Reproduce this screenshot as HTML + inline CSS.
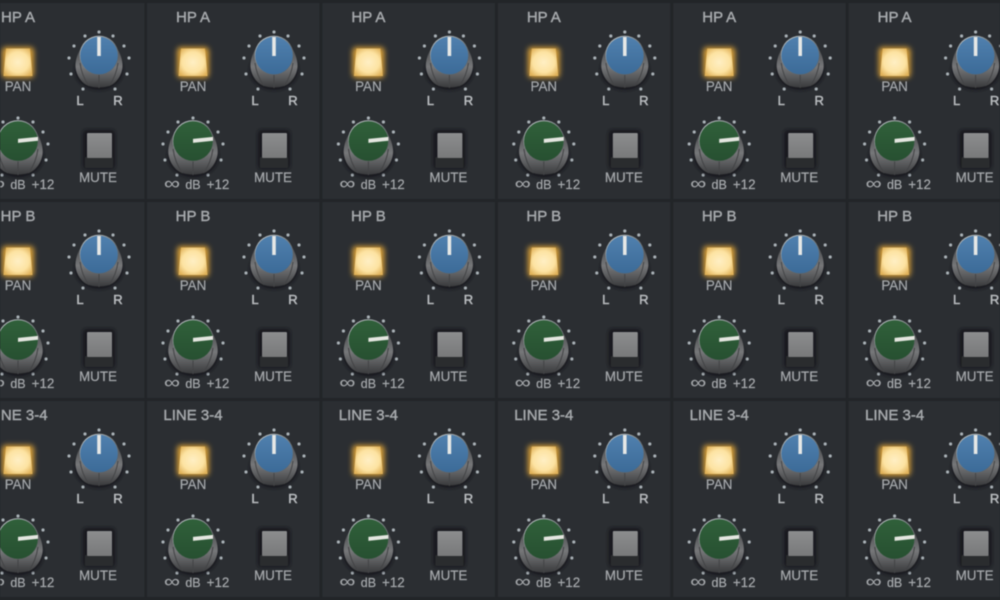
<!DOCTYPE html>
<html><head><meta charset="utf-8"><style>
html,body{margin:0;padding:0;background:#222528;width:1000px;height:600px;overflow:hidden}
svg{display:block;filter:blur(.5px)}
text{font-family:"Liberation Sans",sans-serif;fill:#a6a9ac;text-anchor:middle;stroke:#a6a9ac;stroke-width:.2px}
.t{font-size:15px;stroke-width:.45px}
.l{font-size:13.4px}
.k{font-size:13px;stroke:#b8bbbe;stroke-width:.5px;fill:#b8bbbe}
.d{font-size:12.5px}
.i{font-size:17px;fill:#a6a9ac;stroke:#a6a9ac;stroke-width:.1px}
</style></head><body>
<svg width="1000" height="600" viewBox="0 0 1000 600" xmlns="http://www.w3.org/2000/svg">
<defs>
<linearGradient id="sk" x1="0" y1="0" x2="0" y2="1"><stop offset="0" stop-color="#48494b"/><stop offset=".5" stop-color="#767779"/><stop offset=".75" stop-color="#595a5c"/><stop offset="1" stop-color="#393a3c"/></linearGradient>
<linearGradient id="blue" x1="0" y1="0" x2="0" y2="1"><stop offset="0" stop-color="#5080ae"/><stop offset="1" stop-color="#3c6b98"/></linearGradient>
<linearGradient id="green" x1="0" y1="0" x2="0" y2="1"><stop offset="0" stop-color="#30603a"/><stop offset="1" stop-color="#275031"/></linearGradient>
<linearGradient id="rim" x1="0" y1="0" x2="1" y2="1"><stop offset="0" stop-color="#c8cfd1"/><stop offset=".55" stop-color="#767c7f"/><stop offset="1" stop-color="#484c4f"/></linearGradient>
<radialGradient id="lamp" cx=".5" cy=".5" r=".62"><stop offset="0" stop-color="#ffefc4"/><stop offset=".6" stop-color="#fde3a2"/><stop offset="1" stop-color="#e0b25a"/></radialGradient>
<linearGradient id="cap" x1="0" y1="0" x2="0" y2="1"><stop offset="0" stop-color="#8c8d8e"/><stop offset="1" stop-color="#78797a"/></linearGradient>
<filter id="gl" x="-50%" y="-50%" width="200%" height="200%"><feGaussianBlur stdDeviation="2.6"/></filter>
<filter id="sh" x="-30%" y="-30%" width="160%" height="160%"><feGaussianBlur stdDeviation="1.6"/></filter>
<g id="skirt">
<ellipse cx="0" cy="15" rx="24" ry="20" fill="#17191b" filter="url(#sh)"/>
<path d="M-17-9C-21-2-24 5-23.5 12C-23 20-17 29-10 31C-4 33 4 33 10 31C17 29 23 20 23.5 12C24 5 21-2 17-9Z" fill="url(#sk)"/>
<path d="M-19 8C-18 16-15 24-10 31M19 8C18 16 15 24 10 31M0 20V33" stroke="#434446" stroke-width="1" fill="none"/>
</g>
<g id="dots" fill="#aab2b7">
<circle cx="127" cy="29" r="1.6"/><circle cx="113" cy="33" r="1.6"/><circle cx="141" cy="33" r="1.6"/><circle cx="102" cy="43" r="1.6"/><circle cx="152" cy="43" r="1.6"/><circle cx="97" cy="55" r="1.6"/><circle cx="157" cy="55" r="1.6"/><circle cx="99" cy="71" r="1.6"/><circle cx="155" cy="71" r="1.6"/><circle cx="111" cy="86" r="1.6"/><circle cx="143" cy="86" r="1.6"/>
<circle cx="46" cy="115" r="1.6"/><circle cx="31" cy="119" r="1.6"/><circle cx="61" cy="119" r="1.6"/><circle cx="21" cy="129" r="1.6"/><circle cx="71" cy="129" r="1.6"/><circle cx="16" cy="141" r="1.6"/><circle cx="76" cy="141" r="1.6"/><circle cx="18" cy="157" r="1.6"/><circle cx="74" cy="157" r="1.6"/><circle cx="30" cy="172" r="1.6"/><circle cx="61" cy="172" r="1.6"/>
</g>
<g id="p">
<rect x="0" y="0" width="172.5" height="196" fill="#2b2e32"/>
<use href="#dots"/>
<!-- pan lamp -->
<rect x="30" y="44" width="32" height="31" rx="4" fill="#d39c38" filter="url(#gl)"/>
<path d="M34 45.5H58L60.5 73H31.5Z" fill="url(#lamp)"/>
<!-- blue knob -->
<g transform="translate(127,52)">
<use href="#skirt"/>
<circle r="19.4" fill="url(#rim)"/>
<circle cy=".6" r="18.8" fill="url(#blue)"/>
<rect x="-1.8" y="-18" width="3.6" height="19" fill="#e6e8e6"/>
</g>
<!-- green knob -->
<g transform="translate(46,137.5)">
<g transform="scale(1.05)"><use href="#skirt"/></g>
<circle r="20.4" fill="url(#rim)"/>
<circle cy=".6" r="19.8" fill="url(#green)"/>
<path d="M0 2.4L20 .2V-3.6L0 -1.6Z" fill="#e4e6e0"/>
</g>
<!-- mute -->
<rect x="111" y="127" width="32" height="39" rx="3" fill="#17191b" filter="url(#sh)"/>
<rect x="113" y="154" width="28" height="11" rx="1" fill="#2a2c2e"/>
<rect x="115" y="130" width="25" height="25" rx="1" fill="url(#cap)"/>
</g>
</defs>
<g transform="translate(-28,3)"><use href="#p"/><text class="t" x="46" y="19">HP A</text><text class="l" x="46" y="88">PAN</text><text class="k" x="108" y="102">L</text><text class="k" x="146" y="102">R</text><text class="i" x="25" y="186" textLength="16" lengthAdjust="spacingAndGlyphs">∞</text><text class="d" x="46" y="186">dB</text><text class="l" x="71" y="186">+12</text><text class="l" x="126" y="179">MUTE</text></g>
<g transform="translate(147,3)"><use href="#p"/><text class="t" x="46" y="19">HP A</text><text class="l" x="46" y="88">PAN</text><text class="k" x="108" y="102">L</text><text class="k" x="146" y="102">R</text><text class="i" x="25" y="186" textLength="16" lengthAdjust="spacingAndGlyphs">∞</text><text class="d" x="46" y="186">dB</text><text class="l" x="71" y="186">+12</text><text class="l" x="126" y="179">MUTE</text></g>
<g transform="translate(322.4,3)"><use href="#p"/><text class="t" x="46" y="19">HP A</text><text class="l" x="46" y="88">PAN</text><text class="k" x="108" y="102">L</text><text class="k" x="146" y="102">R</text><text class="i" x="25" y="186" textLength="16" lengthAdjust="spacingAndGlyphs">∞</text><text class="d" x="46" y="186">dB</text><text class="l" x="71" y="186">+12</text><text class="l" x="126" y="179">MUTE</text></g>
<g transform="translate(497.8,3)"><use href="#p"/><text class="t" x="46" y="19">HP A</text><text class="l" x="46" y="88">PAN</text><text class="k" x="108" y="102">L</text><text class="k" x="146" y="102">R</text><text class="i" x="25" y="186" textLength="16" lengthAdjust="spacingAndGlyphs">∞</text><text class="d" x="46" y="186">dB</text><text class="l" x="71" y="186">+12</text><text class="l" x="126" y="179">MUTE</text></g>
<g transform="translate(673.2,3)"><use href="#p"/><text class="t" x="46" y="19">HP A</text><text class="l" x="46" y="88">PAN</text><text class="k" x="108" y="102">L</text><text class="k" x="146" y="102">R</text><text class="i" x="25" y="186" textLength="16" lengthAdjust="spacingAndGlyphs">∞</text><text class="d" x="46" y="186">dB</text><text class="l" x="71" y="186">+12</text><text class="l" x="126" y="179">MUTE</text></g>
<g transform="translate(848.6,3)"><use href="#p"/><text class="t" x="46" y="19">HP A</text><text class="l" x="46" y="88">PAN</text><text class="k" x="108" y="102">L</text><text class="k" x="146" y="102">R</text><text class="i" x="25" y="186" textLength="16" lengthAdjust="spacingAndGlyphs">∞</text><text class="d" x="46" y="186">dB</text><text class="l" x="71" y="186">+12</text><text class="l" x="126" y="179">MUTE</text></g>

<g transform="translate(-28,202)"><use href="#p"/><text class="t" x="46" y="19">HP B</text><text class="l" x="46" y="88">PAN</text><text class="k" x="108" y="102">L</text><text class="k" x="146" y="102">R</text><text class="i" x="25" y="186" textLength="16" lengthAdjust="spacingAndGlyphs">∞</text><text class="d" x="46" y="186">dB</text><text class="l" x="71" y="186">+12</text><text class="l" x="126" y="179">MUTE</text></g>
<g transform="translate(147,202)"><use href="#p"/><text class="t" x="46" y="19">HP B</text><text class="l" x="46" y="88">PAN</text><text class="k" x="108" y="102">L</text><text class="k" x="146" y="102">R</text><text class="i" x="25" y="186" textLength="16" lengthAdjust="spacingAndGlyphs">∞</text><text class="d" x="46" y="186">dB</text><text class="l" x="71" y="186">+12</text><text class="l" x="126" y="179">MUTE</text></g>
<g transform="translate(322.4,202)"><use href="#p"/><text class="t" x="46" y="19">HP B</text><text class="l" x="46" y="88">PAN</text><text class="k" x="108" y="102">L</text><text class="k" x="146" y="102">R</text><text class="i" x="25" y="186" textLength="16" lengthAdjust="spacingAndGlyphs">∞</text><text class="d" x="46" y="186">dB</text><text class="l" x="71" y="186">+12</text><text class="l" x="126" y="179">MUTE</text></g>
<g transform="translate(497.8,202)"><use href="#p"/><text class="t" x="46" y="19">HP B</text><text class="l" x="46" y="88">PAN</text><text class="k" x="108" y="102">L</text><text class="k" x="146" y="102">R</text><text class="i" x="25" y="186" textLength="16" lengthAdjust="spacingAndGlyphs">∞</text><text class="d" x="46" y="186">dB</text><text class="l" x="71" y="186">+12</text><text class="l" x="126" y="179">MUTE</text></g>
<g transform="translate(673.2,202)"><use href="#p"/><text class="t" x="46" y="19">HP B</text><text class="l" x="46" y="88">PAN</text><text class="k" x="108" y="102">L</text><text class="k" x="146" y="102">R</text><text class="i" x="25" y="186" textLength="16" lengthAdjust="spacingAndGlyphs">∞</text><text class="d" x="46" y="186">dB</text><text class="l" x="71" y="186">+12</text><text class="l" x="126" y="179">MUTE</text></g>
<g transform="translate(848.6,202)"><use href="#p"/><text class="t" x="46" y="19">HP B</text><text class="l" x="46" y="88">PAN</text><text class="k" x="108" y="102">L</text><text class="k" x="146" y="102">R</text><text class="i" x="25" y="186" textLength="16" lengthAdjust="spacingAndGlyphs">∞</text><text class="d" x="46" y="186">dB</text><text class="l" x="71" y="186">+12</text><text class="l" x="126" y="179">MUTE</text></g>

<g transform="translate(-28,401)"><use href="#p"/><text class="t" x="46" y="19">LINE 3-4</text><text class="l" x="46" y="88">PAN</text><text class="k" x="108" y="102">L</text><text class="k" x="146" y="102">R</text><text class="i" x="25" y="186" textLength="16" lengthAdjust="spacingAndGlyphs">∞</text><text class="d" x="46" y="186">dB</text><text class="l" x="71" y="186">+12</text><text class="l" x="126" y="179">MUTE</text></g>
<g transform="translate(147,401)"><use href="#p"/><text class="t" x="46" y="19">LINE 3-4</text><text class="l" x="46" y="88">PAN</text><text class="k" x="108" y="102">L</text><text class="k" x="146" y="102">R</text><text class="i" x="25" y="186" textLength="16" lengthAdjust="spacingAndGlyphs">∞</text><text class="d" x="46" y="186">dB</text><text class="l" x="71" y="186">+12</text><text class="l" x="126" y="179">MUTE</text></g>
<g transform="translate(322.4,401)"><use href="#p"/><text class="t" x="46" y="19">LINE 3-4</text><text class="l" x="46" y="88">PAN</text><text class="k" x="108" y="102">L</text><text class="k" x="146" y="102">R</text><text class="i" x="25" y="186" textLength="16" lengthAdjust="spacingAndGlyphs">∞</text><text class="d" x="46" y="186">dB</text><text class="l" x="71" y="186">+12</text><text class="l" x="126" y="179">MUTE</text></g>
<g transform="translate(497.8,401)"><use href="#p"/><text class="t" x="46" y="19">LINE 3-4</text><text class="l" x="46" y="88">PAN</text><text class="k" x="108" y="102">L</text><text class="k" x="146" y="102">R</text><text class="i" x="25" y="186" textLength="16" lengthAdjust="spacingAndGlyphs">∞</text><text class="d" x="46" y="186">dB</text><text class="l" x="71" y="186">+12</text><text class="l" x="126" y="179">MUTE</text></g>
<g transform="translate(673.2,401)"><use href="#p"/><text class="t" x="46" y="19">LINE 3-4</text><text class="l" x="46" y="88">PAN</text><text class="k" x="108" y="102">L</text><text class="k" x="146" y="102">R</text><text class="i" x="25" y="186" textLength="16" lengthAdjust="spacingAndGlyphs">∞</text><text class="d" x="46" y="186">dB</text><text class="l" x="71" y="186">+12</text><text class="l" x="126" y="179">MUTE</text></g>
<g transform="translate(848.6,401)"><use href="#p"/><text class="t" x="46" y="19">LINE 3-4</text><text class="l" x="46" y="88">PAN</text><text class="k" x="108" y="102">L</text><text class="k" x="146" y="102">R</text><text class="i" x="25" y="186" textLength="16" lengthAdjust="spacingAndGlyphs">∞</text><text class="d" x="46" y="186">dB</text><text class="l" x="71" y="186">+12</text><text class="l" x="126" y="179">MUTE</text></g>
</svg>
</body></html>
